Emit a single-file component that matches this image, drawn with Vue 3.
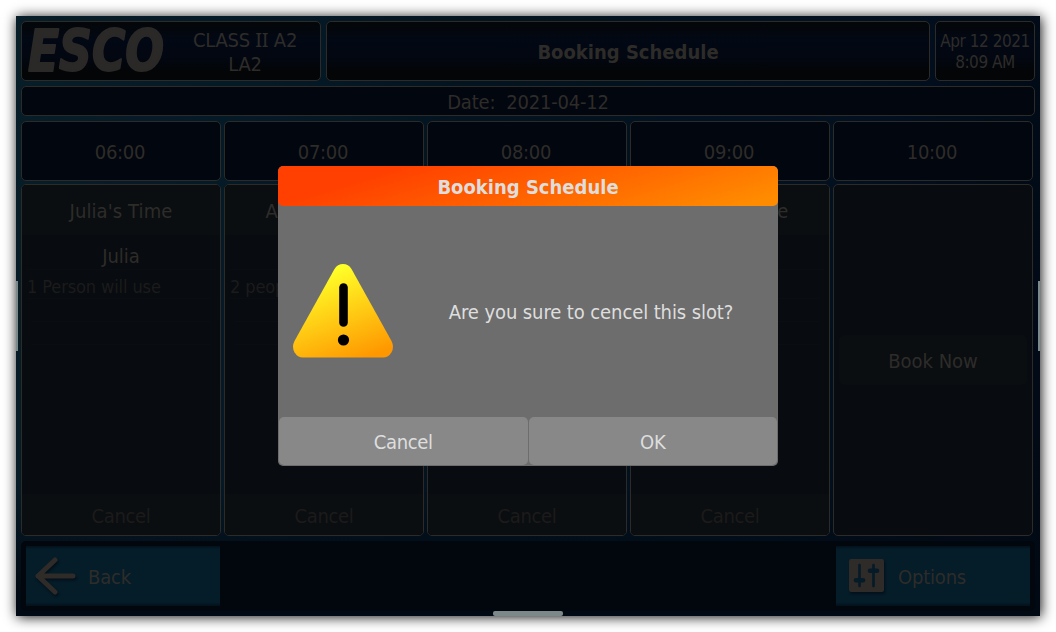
<script setup>
const slots = [
  { time: '06:00', title: "Julia's Time", name: 'Julia', note: '1 Person will use' },
  { time: '07:00', title: "Adam's Time", name: '', note: '2 people will use' },
  { time: '08:00', title: '', name: '', note: '' },
  { time: '09:00', title: "Adam's Time", name: '', note: '' },
  { time: '10:00', free: true },
]
</script>

<template>
  <div class="stage">
    <div class="device">
      <header class="top">
        <div class="panel brand">
          <svg class="logo" width="146" height="58" viewBox="0 0 146 58">
            <text x="6" y="49" textLength="136" lengthAdjust="spacingAndGlyphs">ESCO</text>
          </svg>
          <div class="model">CLASS <span class="roman">II</span> A2<br />LA2</div>
        </div>
        <div class="panel heading">Booking Schedule</div>
        <div class="panel clock">Apr 12 2021<br />8:09 AM</div>
      </header>

      <div class="date">Date:&nbsp; 2021-04-12</div>

      <div class="grid">
        <div v-for="s in slots" :key="s.time" class="time">{{ s.time }}</div>
        <div v-for="s in slots" :key="'c' + s.time" class="slot" :class="{ free: s.free }">
          <div v-if="s.free" class="book">Book Now</div>
          <template v-else>
            <div class="title">{{ s.title }}</div>
            <div class="name">{{ s.name }}</div>
            <div class="note">{{ s.note }}</div>
            <div class="line"></div>
            <div class="line"></div>
            <div class="cancel">Cancel</div>
          </template>
        </div>
      </div>

      <footer class="bottom">
        <div class="btn">
          <svg class="arrow" width="44" height="42" viewBox="0 0 44 42">
            <path d="M21 5 L4 21 L21 37 M4 21 H39" />
          </svg>
          <span>Back</span>
        </div>
        <div class="btn options">
          <svg class="sliders" width="35" height="34" viewBox="0 0 35 34">
            <rect width="35" height="33" rx="2" fill="#2e2b28" />
            <g stroke="#051b28" stroke-linecap="round">
              <path d="M10.5 6V27M24.5 6V27" stroke-width="2.6" />
              <path d="M7 21.2H14M21 11.7H28" stroke-width="4.6" />
            </g>
          </svg>
          <span>Options</span>
        </div>
      </footer>

      <i class="handle left"></i>
      <i class="handle right"></i>
      <i class="handle base"></i>

      <div class="dialog">
        <div class="dialog-title">Booking Schedule</div>
        <div class="dialog-body">
          <svg class="warn" width="100" height="94" viewBox="0 0 100 94">
            <defs>
              <linearGradient id="warn-fill" x1="0.35" y1="0.08" x2="0.72" y2="1">
                <stop offset="0" stop-color="#ffff28" />
                <stop offset="1" stop-color="#ff9800" />
              </linearGradient>
            </defs>
            <path d="M41.5 5Q44.5 0 50 0T58.5 5L98.5 77Q101.5 83 98.5 88.2T90 93.5H10Q4.500 93.500 1.500 88.200T1.500 77Z" fill="url(#warn-fill)" />
            <path d="M50.500 23.500V58.500" stroke="#000" stroke-width="8.600" stroke-linecap="round" />
            <circle cx="50.500" cy="76" r="5.600" />
          </svg>
          <p>Are you sure to cencel this slot?</p>
        </div>
        <div class="dialog-actions">
          <div>Cancel</div>
          <div>OK</div>
        </div>
      </div>
    </div>
  </div>
</template>

<style>
body { background: #fff; }
</style>

<style scoped>
* { box-sizing: border-box; }
.stage {
  width: 1056px;
  height: 632px;
  padding: 16px;
  overflow: hidden;
  background: #fff;
  font-family: "DejaVu Sans Condensed", "DejaVu Sans", sans-serif;
  font-stretch: condensed;
  font-size: 20px;
  color: #2e2c29;
}
.device {
  position: relative;
  width: 1024px;
  height: 600px;
  padding: 5px;
  display: flex;
  flex-direction: column;
  gap: 5px;
  background:
    linear-gradient(to bottom, transparent 78%, #010a14 96%),
    linear-gradient(100deg, #071d27 0%, #051a27 20%, #03131f 45%, #021020 75%, #010914 100%);
  box-shadow: 1px 1px 12px rgba(0, 0, 0, 0.95);
}
.top { display: flex; gap: 5px; height: 60px; }
.panel {
  border: 1px solid #2c2b28;
  border-radius: 5px;
  background: linear-gradient(#040608, #020814 30%, #020711 60%, #030507 85%);
  display: flex;
  align-items: center;
  justify-content: center;
  text-align: center;
}
.brand { width: 300px; justify-content: flex-start; }
.logo { flex: none; overflow: visible; }
.logo text {
  font: italic bold 57px "DejaVu Sans Condensed", "DejaVu Sans", sans-serif;
  fill: #2b2927;
  stroke: #2b2927;
  stroke-width: 2px;
  stroke-linejoin: round;
}
.model { width: 156px; padding: 2px 0 0 2px; line-height: 24px; letter-spacing: -0.25px; }
.roman { font-family: "Noto Sans", sans-serif; }
.heading { flex: 1; padding-top: 2px; font-weight: bold; letter-spacing: 0; }
.clock { width: 100px; padding-top: 2px; font-size: 17px; line-height: 21px; letter-spacing: -0.45px; white-space: nowrap; }
.date {
  height: 30px;
  border: 1px solid #2c2b28;
  border-radius: 5px;
  background: #02060e;
  text-align: center;
  line-height: 31px;
  letter-spacing: -0.2px;
}
.grid {
  display: grid;
  grid-template-columns: repeat(5, 200px);
  grid-template-rows: 60px 352px;
  gap: 3px;
}
.time {
  padding-right: 2px;
  border: 1px solid #2c2b28;
  border-radius: 5px;
  background: #02060e;
  text-align: center;
  line-height: 60px;
  letter-spacing: -0.3px;
}
.slot {
  border: 1px solid #2c2b28;
  border-radius: 5px;
  background: #080b0f;
  display: flex;
  flex-direction: column;
  text-align: center;
  overflow: hidden;
}
.title { height: 50px; line-height: 52px; background: #0a0e11; letter-spacing: 0.1px; }
.name { height: 35px; margin: 0 5px; line-height: 43px; border-bottom: 1px solid #0a0d11; }
.note {
  height: 29px;
  margin: 0 10px 0 5px;
  border-bottom: 1px solid #0a0d11;
  font-size: 18px;
  line-height: 34px;
  text-align: left;
  color: #1b1b1b;
  letter-spacing: -0.1px;
}
.line { height: 23px; margin: 0 10px; border-bottom: 1px solid #0a0d11; }
.cancel { margin-top: auto; height: 41px; line-height: 44px; background: #0a0e11; color: #1c1b1a; letter-spacing: -0.35px; }
.free { justify-content: center; }
.book { height: 50px; margin: 0 5px; line-height: 52px; border-radius: 5px; background: #0a0e11; }
.bottom {
  height: 70px;
  padding: 5px;
  display: flex;
  justify-content: space-between;
  border-radius: 5px;
  background: #02060d;
}
.btn {
  width: 194px;
  height: 60px;
  padding-left: 8px;
  display: flex;
  align-items: center;
  gap: 10px;
  letter-spacing: -0.2px;
  background: linear-gradient(#03101a, #051c29 5%, #051c29 94%, #03101a);
}
.btn span { position: relative; top: 1px; }
.options { padding-left: 13px; gap: 14px; }
.arrow path { fill: none; stroke: #2e2b28; stroke-width: 5; stroke-linecap: round; stroke-linejoin: round; }
.arrow, .sliders { filter: drop-shadow(1px 2px 1px #02101a); }
.handle { position: absolute; background: #7b898b; }
.left, .right { top: 265px; width: 2px; height: 70px; }
.left { left: 0; }
.right { right: 0; }
.base { left: 477px; bottom: 0; width: 70px; height: 5px; border-radius: 2px; }
.dialog {
  position: absolute;
  left: 262px;
  top: 150px;
  width: 500px;
  height: 300px;
  display: flex;
  flex-direction: column;
  border-radius: 5px;
  background: #6d6d6d;
  color: #dedede;
  overflow: hidden;
}
.dialog-title {
  height: 40px;
  border-radius: 5px;
  background: linear-gradient(163deg, #ff4000 20%, #ff8c00 95%);
  text-align: center;
  font-weight: bold;
  line-height: 42px;
}
.dialog-body { flex: 1; display: flex; align-items: center; padding-left: 15px; }
.warn { flex: none; margin-bottom: 2px; }
.dialog-body p { flex: 1; margin: 0 -11px 0 0; text-align: center; letter-spacing: -0.1px; }
.dialog-actions { display: flex; gap: 1px; height: 49px; padding: 0 1px 1px; }
.dialog-actions div { flex: 1; border-radius: 5px; background: #888; text-align: center; line-height: 50px; letter-spacing: -0.3px; }
</style>
